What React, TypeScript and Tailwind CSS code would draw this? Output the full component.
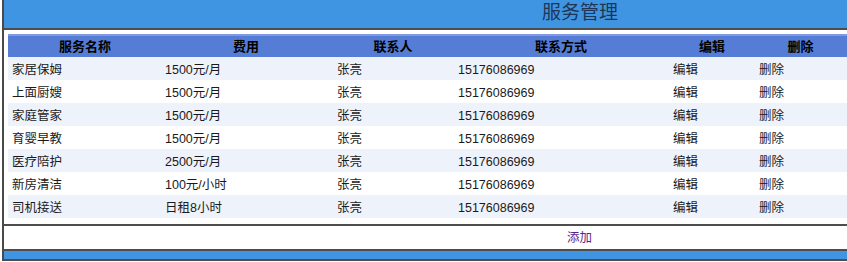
const rows = [
  { name: "家居保姆", fee: "1500元/月" },
  { name: "上面厨嫂", fee: "1500元/月" },
  { name: "家庭管家", fee: "1500元/月" },
  { name: "育婴早教", fee: "1500元/月" },
  { name: "医疗陪护", fee: "2500元/月" },
  { name: "新房清洁", fee: "100元/小时" },
  { name: "司机接送", fee: "日租8小时" },
];

const cols = "grid grid-cols-[154px_168px_126px_210px_92px_85px]";

export default function App() {
  return (
    <div
      className="w-[847px] h-[262px] overflow-hidden bg-white pl-[2px] text-black"
      style={{ fontFamily: '"Liberation Sans", "Noto Sans CJK SC", sans-serif' }}
    >
      <div className="border-l-2 border-[#4a4a4a] w-[900px]">
        <div className="h-[30px] bg-[#3f95e2] border-b-2 border-[#4d4d4d] pl-[538px] text-[19px] leading-[26px] text-[#1e3556]">
          服务管理
        </div>

        <div className="pt-[4px] pb-[6px] pl-[4px]">
          <div className={`${cols} h-[23px] bg-[#557dd6] border-t-2 border-[#7f9ae0] items-center text-[13px] font-bold`}>
            <div className="text-center">服务名称</div>
            <div className="text-center">费用</div>
            <div className="text-center">联系人</div>
            <div className="text-center">联系方式</div>
            <div className="text-center">编辑</div>
            <div className="text-center">删除</div>
          </div>
          {rows.map((r, i) => (
            <div
              key={r.name}
              className={`${cols} h-[23px] pt-[4px] items-center text-[12.5px] text-[#1a1a1a] ${
                i % 2 === 0 ? "bg-[#eef2fa]" : "bg-white"
              }`}
            >
              <div className="pl-[4px]">{r.name}</div>
              <div className="pl-[3px]">{r.fee}</div>
              <div className="pl-[7px]">张亮</div>
              <div className="pl-[2px]">15176086969</div>
              <div className="pl-[7px]">编辑</div>
              <div className="pl-[1px]">删除</div>
            </div>
          ))}
        </div>

        <div className="border-t-2 border-[#4d4d4d] h-[25px] pl-[563px] text-[12.5px] leading-[24px] text-[#5b1f8a]">
          添加
        </div>
        <div className="border-t-2 border-[#4d4d4d] h-[12px] bg-[#3f95e2] border-b-2 border-b-[#4d4d4d]" />
      </div>
    </div>
  );
}
